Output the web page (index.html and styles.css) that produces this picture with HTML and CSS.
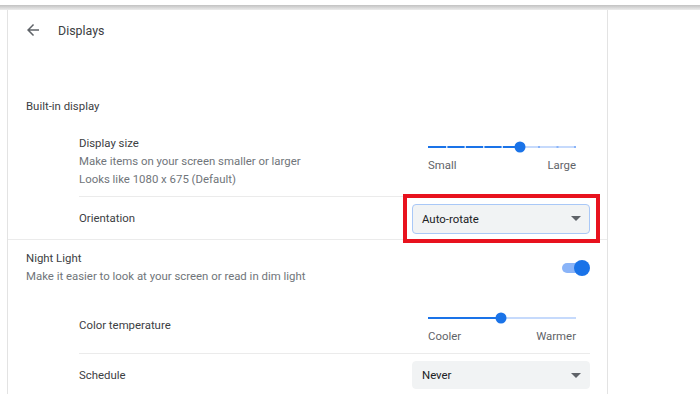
FILE: index.html
```html
<!DOCTYPE html>
<html lang="en">
<head>
    <meta charset="UTF-8">
    <meta name="viewport" content="width=device-width, initial-scale=1.0">
    <title>Displays</title>
    <link rel="stylesheet" href="styles.css">
</head>
<body>
    <div class="topbar"></div>
    <div class="page">
        <div class="card">
            <div class="header">
                <svg class="back" width="18" height="18" viewBox="0 0 24 24"><path d="M20 11H7.83l5.59-5.59L12 4l-8 8 8 8 1.41-1.41L7.83 13H20v-2z" fill="#5f6368"/></svg>
                <span class="title">Displays</span>
            </div>

            <div class="section bordered">
                <div class="section-title">Built-in display</div>

                <div class="row size-row">
                    <div class="text">
                        <div class="label">Display size</div>
                        <div class="sub">Make items on your screen smaller or larger</div>
                        <div class="sub">Looks like 1080 x 675 (Default)</div>
                    </div>
                    <div class="slider">
                        <svg width="148" height="16" viewBox="0 0 148 16">
                            <line x1="92" y1="8" x2="148" y2="8" stroke="#c6dafc" stroke-width="2"/>
                            <line x1="0" y1="8" x2="92" y2="8" stroke="#1a73e8" stroke-width="2"/>
                            <g fill="#d2e3fc">
                                <rect x="18" y="7" width="1.5" height="2"/>
                                <rect x="36.5" y="7" width="1.5" height="2"/>
                                <rect x="55" y="7" width="1.5" height="2"/>
                                <rect x="73.5" y="7" width="1.5" height="2"/>
                            </g>
                            <g fill="#8ab4f8">
                                <rect x="110" y="7" width="2" height="2"/>
                                <rect x="128.5" y="7" width="2" height="2"/>
                                <rect x="146" y="7" width="2" height="2"/>
                            </g>
                            <circle cx="92" cy="8" r="5.5" fill="#1a73e8"/>
                        </svg>
                        <div class="ends"><span>Small</span><span>Large</span></div>
                    </div>
                </div>

                <div class="row sub-row">
                    <div class="label">Orientation</div>
                    <div class="highlight">
                        <div class="dropdown focused">
                            <span>Auto-rotate</span>
                            <span class="caret"></span>
                        </div>
                    </div>
                </div>
            </div>

            <div class="section">
                <div class="night">
                    <div class="text">
                        <div class="label">Night Light</div>
                        <div class="sub">Make it easier to look at your screen or read in dim light</div>
                    </div>
                    <div class="toggle"><span class="knob"></span></div>
                </div>

                <div class="row temp-row">
                    <div class="label temp-label">Color temperature</div>
                    <div class="slider">
                        <svg width="148" height="16" viewBox="0 0 148 16">
                            <line x1="73" y1="8" x2="148" y2="8" stroke="#c6dafc" stroke-width="2"/>
                            <line x1="0" y1="8" x2="73" y2="8" stroke="#1a73e8" stroke-width="2"/>
                            <circle cx="73" cy="8" r="5.5" fill="#1a73e8"/>
                        </svg>
                        <div class="ends"><span>Cooler</span><span>Warmer</span></div>
                    </div>
                </div>

                <div class="row sub-row">
                    <div class="label">Schedule</div>
                    <div class="dropdown">
                        <span>Never</span>
                        <span class="caret"></span>
                    </div>
                </div>
            </div>
        </div>
    </div>
</body>
</html>
```

FILE: styles.css
```css
body {
    margin: 0;
    font-family: Roboto, "Noto Sans", sans-serif;
    font-size: 11.4px;
    color: #202124;
    background: #fff;
    overflow: hidden;
}
.topbar {
    height: 10px;
    background: linear-gradient(to bottom, #fff 0, #fff 5px, #c2c2c2 5px, #ececec 10px);
}
.page {
    display: flex;
}
.card {
    width: 599px;
    margin-left: 7px;
    border-left: 1px solid #e3e3e3;
    border-right: 1px solid #e3e3e3;
    height: 384px;
}
.header {
    height: 40px;
    display: flex;
    align-items: center;
    padding-left: 16px;
}
.back {
    margin-right: 16px;
}
.title {
    font-size: 12.4px;
    color: #3c4043;
}
.section {
    padding: 0 17px 0 18px;
}
.bordered {
    border-bottom: 1px solid #ebebeb;
}
.section-title {
    margin-top: 46px;
    line-height: 20px;
    color: #3c4043;
}
.row {
    display: flex;
    align-items: center;
    justify-content: space-between;
    margin-left: 53px;
}
.label {
    line-height: 18px;
    color: #3c4043;
}
.sub {
    line-height: 18px;
    color: #70757a;
}
.size-row {
    padding: 18px 0 8px;
    border-bottom: 1px solid #ebebeb;
}
.sub-row {
    height: 42px;
}
.slider {
    width: 148px;
    margin-right: 14px;
}
.slider svg {
    display: block;
}
.ends {
    display: flex;
    justify-content: space-between;
    line-height: 18px;
    color: #5f6368;
    margin-top: 1px;
}
.size-row .slider {
    margin-top: -10px;
}
.dropdown {
    width: 178px;
    height: 28px;
    box-sizing: border-box;
    display: flex;
    align-items: center;
    justify-content: space-between;
    padding: 0 8px 0 9px;
    background: #f1f3f4;
    border: 1px solid #f1f3f4;
    border-radius: 4px;
    color: #202124;
}
/* recuadro rojo de la captura */
.highlight {
    border: 4px solid #e8121e;
    padding: 6px 6px 5px 5px;
    margin: -4px -10px -4px 0;
}
.dropdown.focused {
    height: 30px;
    border-color: #a9c8f7;
}
.caret {
    width: 0;
    height: 0;
    border-left: 5px solid transparent;
    border-right: 5px solid transparent;
    border-top: 5px solid #5f6368;
}
.night {
    display: flex;
    align-items: center;
    justify-content: space-between;
    padding-top: 9px;
}
.toggle {
    position: relative;
    width: 26px;
    height: 10px;
    border-radius: 5px;
    background: #8ab4f8;
    margin-right: 2px;
    margin-top: 2px;
}
.knob {
    position: absolute;
    right: -2px;
    top: -3px;
    width: 16px;
    height: 16px;
    border-radius: 50%;
    background: #1a73e8;
}
.temp-row {
    padding: 25px 0 8px;
    border-bottom: 1px solid #ebebeb;
}
.temp-label {
    padding-bottom: 6px;
}
```
